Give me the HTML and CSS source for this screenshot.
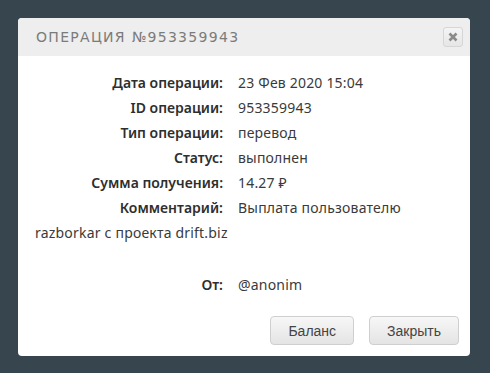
FILE: index.html
```html
<!DOCTYPE html>
<html lang="ru">

<head>
  <meta charset="UTF-8">
  <meta name="viewport" content="width=device-width, initial-scale=1.0">
  <title>Операция №953359943</title>
  <link rel="stylesheet" href="styles.css">
</head>

<body>

  <div class="dialog">
    <div class="dialog-header">
      <span class="dialog-title">Операция №953359943</span>
      <button class="dialog-close" title="Закрыть">
        <svg width="10" height="10" viewBox="0 0 10 10">
          <path d="M1.5 1.5 L8.5 8.5 M8.5 1.5 L1.5 8.5" stroke="#8a8a8a" stroke-width="2.6" stroke-linecap="butt" />
        </svg>
      </button>
    </div>

    <div class="dialog-body">
      <div class="row"><span class="label">Дата операции:</span>23 Фев 2020 15:04</div>
      <div class="row"><span class="label">ID операции:</span>953359943</div>
      <div class="row"><span class="label">Тип операции:</span>перевод</div>
      <div class="row"><span class="label">Статус:</span>выполнен</div>
      <div class="row"><span class="label">Сумма получения:</span>14.27 ₽</div>
      <div class="row"><span class="label">Комментарий:</span>Выплата пользователю razborkar с проекта drift.biz</div>
      <div class="row row-from"><span class="label">От:</span>@anonim</div>
    </div>

    <div class="dialog-buttons">
      <button class="btn">Баланс</button>
      <button class="btn">Закрыть</button>
    </div>
  </div>

</body>

</html>
```

FILE: styles.css
```css
body {
  margin: 0;
  background-color: #36454e;
  font-family: 'Noto Sans', sans-serif;
  padding: 18px 20px 17px 18px;
}

.dialog {
  width: 452px;
  height: 338px;
  background-color: #fff;
  border-radius: 4px;
  overflow: hidden;
  display: flex;
  flex-direction: column;
}

.dialog-header {
  height: 38px;
  background-color: #eeeeee;
  display: flex;
  align-items: center;
  justify-content: space-between;
  padding: 0 7px 0 18px;
}

.dialog-title {
  font-family: 'DejaVu Sans', sans-serif;
  font-size: 14px;
  letter-spacing: 1.3px;
  color: #7b7b7b;
  text-transform: uppercase;
}

.dialog-close {
  width: 20px;
  height: 20px;
  padding: 0;
  border: 1px solid #d6d6d6;
  border-radius: 3px;
  background: linear-gradient(#f4f4f4, #e6e6e6);
  display: flex;
  align-items: center;
  justify-content: center;
}

.dialog-body {
  flex: 1;
  padding: 14px 20px 0 17px;
  font-size: 14px;
  letter-spacing: 0.2px;
  line-height: 25px;
  color: #3a3a3a;
}

.label {
  display: inline-block;
  width: 188px;
  margin-right: 15px;
  text-align: right;
  font-weight: 600;
  letter-spacing: 0;
  color: #2e2e2e;
}

.row-from {
  margin-top: 27px;
}

.dialog-buttons {
  display: flex;
  justify-content: flex-end;
  gap: 15px;
  padding: 0 11px 11px 0;
}

.btn {
  height: 29px;
  padding: 0 17px;
  font-family: 'Liberation Sans', Arial, sans-serif;
  font-size: 14px;
  color: #444;
  border: 1px solid #cfcfcf;
  border-radius: 4px;
  background: linear-gradient(#f7f7f7, #e4e4e4);
}
```
